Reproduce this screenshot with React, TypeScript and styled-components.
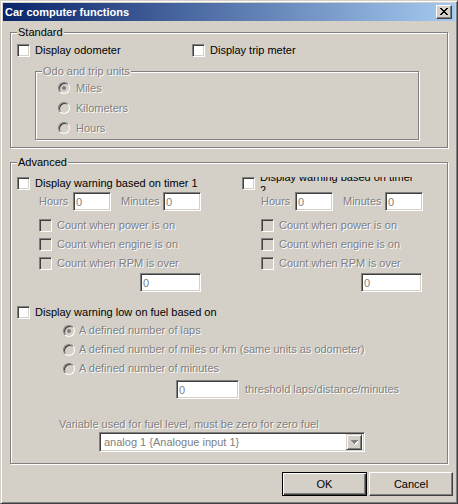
import styled, { createGlobalStyle } from "styled-components";

const face = "#d4d0c8";
const shadow = "#808080";
const dark = "#404040";

const GlobalStyle = createGlobalStyle`
  html, body {
    margin: 0;
    padding: 0;
    background: ${face};
  }
  body {
    font-family: "Liberation Sans", Arial, sans-serif;
    font-size: 11px;
  }
`;

const Window = styled.div`
  width: 458px;
  height: 504px;
  box-sizing: border-box;
  background: ${face};
  border: 1px solid;
  border-color: ${face} ${dark} ${dark} ${face};
  box-shadow: inset 1px 1px 0 #fff, inset -1px -1px 0 ${shadow};
  padding: 2px;
  display: flex;
  flex-direction: column;
`;

const TitleBar = styled.div`
  height: 18px;
  flex: none;
  display: flex;
  align-items: center;
  justify-content: space-between;
  padding: 0 3px 0 2px;
  background: linear-gradient(to right, #0a246a, #a6caf0);
`;

const TitleText = styled.span`
  color: #fff;
  font-weight: bold;
  font-size: 11px;
`;

const CloseButton = styled.div`
  width: 16px;
  height: 14px;
  box-sizing: border-box;
  background: ${face};
  border: 1px solid;
  border-color: #fff ${dark} ${dark} #fff;
  box-shadow: inset -1px -1px 0 ${shadow};
  display: flex;
  align-items: center;
  justify-content: center;
  padding: 0 1px 1px 0;
`;

const Body = styled.div`
  display: flex;
  flex-direction: column;
  padding: 0 2px 0 7px;
`;

const Group = styled.div<{ $width: number; $mt: number; $ml?: number; $pad: string }>`
  position: relative;
  width: ${(p) => p.$width}px;
  box-sizing: border-box;
  margin-top: ${(p) => p.$mt}px;
  margin-left: ${(p) => p.$ml ?? 0}px;
  padding: ${(p) => p.$pad};
  border: 1px solid ${shadow};
  box-shadow: inset 1px 1px 0 #fff, 1px 1px 0 #fff;
  display: flex;
  flex-direction: column;
`;

const Legend = styled.span<{ $disabled?: boolean }>`
  position: absolute;
  top: -7px;
  left: 6px;
  line-height: 13px;
  padding: 0 1px;
  background: ${face};
  color: ${(p) => (p.$disabled ? shadow : "#000")};
  text-shadow: ${(p) => (p.$disabled ? "1px 1px 0 #fff" : "none")};
  white-space: nowrap;
`;

const Row = styled.div<{ $h?: number; $mt?: number; $indent?: number; $gap?: number }>`
  display: flex;
  align-items: center;
  height: ${(p) => p.$h ?? 13}px;
  margin-top: ${(p) => p.$mt ?? 0}px;
  margin-left: ${(p) => p.$indent ?? 0}px;
  gap: ${(p) => p.$gap ?? 5}px;
`;

const Text = styled.span<{ $disabled?: boolean; $w?: number; $ml?: number }>`
  color: ${(p) => (p.$disabled ? shadow : "#000")};
  text-shadow: ${(p) => (p.$disabled ? "1px 1px 0 #fff" : "none")};
  white-space: nowrap;
  line-height: 13px;
  width: ${(p) => (p.$w ? `${p.$w}px` : "auto")};
  margin-left: ${(p) => p.$ml ?? 0}px;
  flex: none;
`;

const ClipLabel = styled.span`
  height: 14px;
  overflow: hidden;
  display: flex;
  align-items: center;
`;

const Wrapped = styled.span`
  line-height: 13px;
  color: #000;
  white-space: nowrap;
`;

const Check = styled.span<{ $disabled?: boolean }>`
  width: 13px;
  height: 13px;
  flex: none;
  box-sizing: border-box;
  border: 1px solid;
  border-color: ${shadow} #fff #fff ${shadow};
  box-shadow: inset 1px 1px 0 ${dark}, inset -1px -1px 0 ${face};
  background: ${(p) => (p.$disabled ? face : "#fff")};
`;

const Radio = styled.span<{ $checked?: boolean }>`
  width: 12px;
  height: 12px;
  flex: none;
  box-sizing: border-box;
  border-radius: 50%;
  border: 1px solid;
  border-color: ${shadow} #fff #fff ${shadow};
  box-shadow: inset 1px 1px 0 ${dark}, inset -1px -1px 0 ${face};
  background: ${face};
  display: flex;
  align-items: center;
  justify-content: center;

  &::after {
    content: "";
    width: 4px;
    height: 4px;
    border-radius: 50%;
    background: ${(p) => (p.$checked ? shadow : "transparent")};
  }
`;

const Edit = styled.span<{ $w: number }>`
  width: ${(p) => p.$w}px;
  height: 19px;
  flex: none;
  box-sizing: border-box;
  border: 1px solid;
  border-color: ${shadow} #fff #fff ${shadow};
  box-shadow: inset 1px 1px 0 ${dark}, inset -1px -1px 0 ${face};
  background: #fff;
  color: ${shadow};
  padding-left: 2px;
  display: flex;
  align-items: center;
`;

const Columns = styled.div`
  display: grid;
  grid-template-columns: 225px 1fr;
`;

const Column = styled.div`
  display: flex;
  flex-direction: column;
`;

const Combo = styled.div`
  width: 266px;
  height: 20px;
  box-sizing: border-box;
  margin: 1px 0 0 82px;
  border: 1px solid;
  border-color: ${shadow} #fff #fff ${shadow};
  box-shadow: inset 1px 1px 0 ${dark}, inset -1px -1px 0 ${face};
  background: #fff;
  padding: 2px 2px 2px 4px;
  display: flex;
  align-items: center;
  justify-content: space-between;
  color: ${shadow};
`;

const ComboArrow = styled.span`
  width: 16px;
  height: 16px;
  box-sizing: border-box;
  background: ${face};
  border: 1px solid;
  border-color: ${face} ${dark} ${dark} ${face};
  box-shadow: inset 1px 1px 0 #fff, inset -1px -1px 0 ${shadow};
  display: flex;
  align-items: center;
  justify-content: center;
`;

const ButtonRow = styled.div`
  display: flex;
  justify-content: flex-end;
  gap: 2px;
  margin-top: 8px;
`;

const PushButton = styled.div<{ $default?: boolean; $w: number }>`
  width: ${(p) => p.$w}px;
  height: 24px;
  box-sizing: border-box;
  background: ${face};
  border: 1px solid;
  border-color: ${(p) => (p.$default ? "#000" : `#fff ${dark} ${dark} #fff`)};
  box-shadow: ${(p) =>
    p.$default
      ? `inset 1px 1px 0 #fff, inset -1px -1px 0 ${dark}, inset -2px -2px 0 ${shadow}`
      : `inset -1px -1px 0 ${shadow}`};
  display: flex;
  align-items: center;
  justify-content: center;
  color: #000;
`;

const CheckItem = ({ label, disabled, w }: { label: string; disabled?: boolean; w?: number }) => (
  <>
    <Check $disabled={disabled} />
    <Text $disabled={disabled} $w={w}>{label}</Text>
  </>
);

const CloseGlyph = () => (
  <svg width="8" height="7" viewBox="0 0 8 7" shapeRendering="crispEdges">
    <path
      fill="#000"
      d="M0 0h2v1H0z M6 0h2v1H6z M1 1h2v1H1z M5 1h2v1H5z M2 2h4v1H2z M3 3h2v1H3z M2 4h4v1H2z M1 5h2v1H1z M5 5h2v1H5z M0 6h2v1H0z M6 6h2v1H6z"
    />
  </svg>
);

const ArrowGlyph = () => (
  <svg width="8" height="5" viewBox="0 0 8 5" shapeRendering="crispEdges">
    <path fill="#fff" d="M2 1h7v1H2z M3 2h5v1H3z M4 3h3v1H4z M5 4h1v1H5z" />
    <path fill={shadow} d="M1 0h7v1H1z M2 1h5v1H2z M3 2h3v1H3z M4 3h1v1H4z" />
  </svg>
);

type TimerProps = { n: number; indent: number; rpmIndent: number; right?: boolean };

// one "Display warning based on timer N" block
const TimerColumn = ({ n, indent, rpmIndent, right }: TimerProps) => (
  <Column>
    <Row $h={13} $mt={14}>
      <Check />
      {right ? (
        <ClipLabel>
          <Wrapped>
            Display warning based on timer
            <br />
            {n}
          </Wrapped>
        </ClipLabel>
      ) : (
        <Text>Display warning based on timer {n}</Text>
      )}
    </Row>
    <Row $h={19} $mt={2} $indent={indent} $gap={0}>
      <Text $disabled $w={34}>Hours</Text>
      <Edit $w={38}>0</Edit>
      <Text $disabled $w={42} $ml={10}>Minutes</Text>
      <Edit $w={38}>0</Edit>
    </Row>
    <Row $h={19} $mt={5} $indent={indent}>
      <CheckItem label="Count when power is on" disabled />
    </Row>
    <Row $h={19} $indent={indent}>
      <CheckItem label="Count when engine is on" disabled />
    </Row>
    <Row $h={19} $indent={indent}>
      <CheckItem label="Count when RPM is over" disabled />
    </Row>
    <Row $h={19} $indent={rpmIndent} $gap={0}>
      <Edit $w={61}>0</Edit>
    </Row>
  </Column>
);

export default function App() {
  return (
    <>
      <GlobalStyle />
      <Window>
        <TitleBar>
          <TitleText>Car computer functions</TitleText>
          <CloseButton>
            <CloseGlyph />
          </CloseButton>
        </TitleBar>
        <Body>
          <Group $width={438} $mt={11} $pad="11px 6px 7px">
            <Legend>Standard</Legend>
            <Row $h={13}>
              <CheckItem label="Display odometer" w={152} />
              <CheckItem label="Display trip meter" />
            </Row>
            <Group $width={384} $mt={14} $ml={18} $pad="6px 0 1px 22px">
              <Legend $disabled>Odo and trip units</Legend>
              <Row $h={20} $gap={6}>
                <Radio $checked />
                <Text $disabled>Miles</Text>
              </Row>
              <Row $h={20} $gap={6}>
                <Radio />
                <Text $disabled>Kilometers</Text>
              </Row>
              <Row $h={20} $gap={6}>
                <Radio />
                <Text $disabled>Hours</Text>
              </Row>
            </Group>
          </Group>

          <Group $width={438} $mt={14} $pad="0 6px 11px">
            <Legend>Advanced</Legend>
            <Columns>
              <TimerColumn n={1} indent={22} rpmIndent={123} />
              <TimerColumn n={2} indent={19} rpmIndent={119} right />
            </Columns>
            <Row $h={13} $mt={14}>
              <CheckItem label="Display warning low on fuel based on" />
            </Row>
            <Row $h={19} $mt={2} $indent={46} $gap={4}>
              <Radio $checked />
              <Text $disabled>A defined number of laps</Text>
            </Row>
            <Row $h={19} $indent={46} $gap={4}>
              <Radio />
              <Text $disabled>A defined number of miles or km (same units as odometer)</Text>
            </Row>
            <Row $h={19} $indent={46} $gap={4}>
              <Radio />
              <Text $disabled>A defined number of minutes</Text>
            </Row>
            <Row $h={19} $mt={2} $indent={159} $gap={6}>
              <Edit $w={63}>0</Edit>
              <Text $disabled>threshold laps/distance/minutes</Text>
            </Row>
            <Row $h={13} $mt={19} $indent={42}>
              <Text $disabled>Variable used for fuel level, must be zero for zero fuel</Text>
            </Row>
            <Combo>
              <span>analog 1 {"{"}Analogue input 1{"}"}</span>
              <ComboArrow>
                <ArrowGlyph />
              </ComboArrow>
            </Combo>
          </Group>

          <ButtonRow>
            <PushButton $default $w={85}>OK</PushButton>
            <PushButton $w={84}>Cancel</PushButton>
          </ButtonRow>
        </Body>
      </Window>
    </>
  );
}
